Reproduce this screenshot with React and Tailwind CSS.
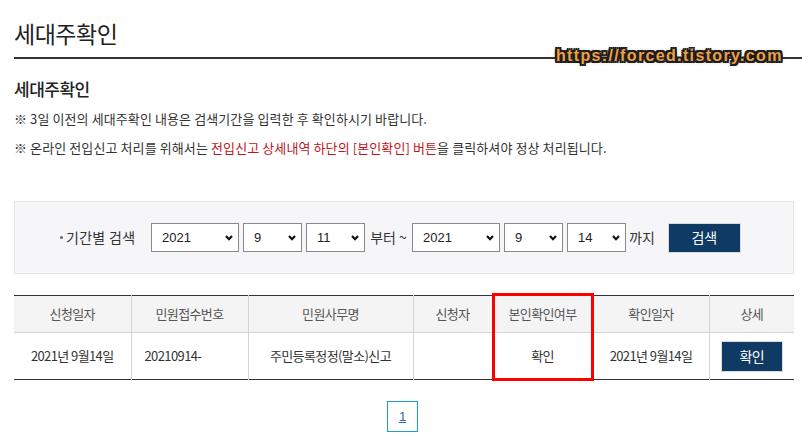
import React from "react";

const Chevron = () => (
  <svg width="8" height="6" viewBox="0 0 8 6" className="pointer-events-none absolute right-[6px] top-1/2 -translate-y-1/2">
    <polyline points="1,1 4,4.2 7,1" fill="none" stroke="#111" strokeWidth="2.2" />
  </svg>
);

const DateSelect = ({ w, value, options, className = "" }) => (
  <div className={`relative h-[29px] ${w} ${className}`}>
    <select
      defaultValue={value}
      className="h-full w-full appearance-none border border-[#8a8a8a] bg-white pl-[10px] font-['Liberation_Sans',sans-serif] text-[13px] text-[#222] outline-none"
    >
      {options.map((o) => (
        <option key={o} value={o}>{o}</option>
      ))}
    </select>
    <Chevron />
  </div>
);

const years = ["2019", "2020", "2021"];
const months = Array.from({ length: 12 }, (_, i) => String(i + 1));
const days = Array.from({ length: 31 }, (_, i) => String(i + 1));

const cols = [
  { title: "신청일자", w: "w-[117px]" },
  { title: "민원접수번호", w: "w-[117px]" },
  { title: "민원사무명", w: "w-[165px]" },
  { title: "신청자", w: "w-[79px]" },
  { title: "본인확인여부", w: "w-[101px]" },
  { title: "확인일자", w: "w-[116px]" },
  { title: "상세", w: "w-[85px]" },
];

export default function App() {
  return (
    <div className="relative h-[435px] w-[802px] overflow-hidden bg-white font-['Noto_Sans_CJK_KR',sans-serif] text-[#333]">
      {/* page title */}
      <div className="pl-[14px]">
        <h1 className="pt-[17px] text-[23px] leading-[32px] tracking-[-0.5px] text-[#222]">세대주확인</h1>
        <div className="mt-[8px] h-[2px] bg-[#333]" />
      </div>

      {/* watermark */}
      <div className="absolute left-[556px] top-[45px] font-['Liberation_Sans',sans-serif] text-[16px] font-bold leading-[22px] tracking-[1.35px] text-[#ee9f45] [text-shadow:_-2px_0_#1c1c1c,_2px_0_#1c1c1c,_0_-2px_#1c1c1c,_0_2px_#1c1c1c,_-2px_-2px_#1c1c1c,_2px_2px_#1c1c1c,_-2px_2px_#1c1c1c,_2px_-2px_#1c1c1c,_0_0_4px_#555]">
        https://forced.tistory.com
      </div>

      <div className="px-[14px]">
        <h2 className="mt-[18px] text-[17px] font-medium leading-[24px] tracking-[-0.5px] text-[#222]">세대주확인</h2>
        <p className="mt-[8px] text-[13px] leading-[20px] tracking-[0.1px]">
          ※ 3일 이전의 세대주확인 내용은 검색기간을 입력한 후 확인하시기 바랍니다.
        </p>
        <p className="mt-[9px] text-[13px] leading-[20px] tracking-[0.1px]">
          ※ 온라인 전입신고 처리를 위해서는{" "}
          <span className="text-[#c0141c]">전입신고 상세내역 하단의 [본인확인] 버튼</span>을 클릭하셔야 정상 처리됩니다.
        </p>

        {/* search box */}
        <div className="mt-[43px] flex h-[73px] w-[780px] items-center border border-[#e3e3e8] bg-[#f6f6f8] pl-[45px]">
          <span className="flex w-[91px] items-center text-[14px] tracking-[0.3px] text-[#333]">
            <span className="mr-[3px] inline-block h-[3px] w-[3px] rounded-full bg-[#666]" />
            기간별 검색
          </span>
          <DateSelect w="w-[88px]" value="2021" options={years} />
          <DateSelect w="w-[59px]" value="9" options={months} className="ml-[4px]" />
          <DateSelect w="w-[59px]" value="11" options={days} className="ml-[4px]" />
          <span className="w-[47px] text-center text-[14px]">부터 ~</span>
          <DateSelect w="w-[88px]" value="2021" options={years} />
          <DateSelect w="w-[59px]" value="9" options={months} className="ml-[4px]" />
          <DateSelect w="w-[59px]" value="14" options={days} className="ml-[4px]" />
          <span className="ml-[3px] text-[14px]">까지</span>
          <button className="ml-[13px] h-[30px] w-[73px] border border-[#d8dce2] bg-[#0f3a63] text-[14px] text-white">
            검색
          </button>
        </div>

        {/* result table */}
        <div className="relative mt-[21px] w-[780px]">
          <table className="w-full border-collapse text-[13px] tracking-[-0.6px]">
            <thead>
              <tr className="h-[37px] border-t border-[#333] border-b border-b-[#d4d4d4] bg-[#f4f4f4]">
                {cols.map((c, i) => (
                  <th
                    key={c.title}
                    className={`${c.w} font-normal text-[#555] ${i > 0 ? "border-l border-[#d4d4d4]" : ""}`}
                  >
                    {c.title}
                  </th>
                ))}
              </tr>
            </thead>
            <tbody>
              <tr className="h-[47px] border-b border-[#333]">
                <td className="text-center">2021년 9월14일</td>
                <td className="border-l border-[#d4d4d4] pl-[13px]">20210914-</td>
                <td className="border-l border-[#d4d4d4] text-center">주민등록정정(말소)신고</td>
                <td className="border-l border-[#d4d4d4]" />
                <td className="border-l border-[#d4d4d4] text-center">확인</td>
                <td className="border-l border-[#d4d4d4] text-center">2021년 9월14일</td>
                <td className="border-l border-[#d4d4d4] text-center">
                  <button className="h-[31px] w-[62px] border border-[#d8dce2] bg-[#0f3a63] text-[14px] text-white">
                    확인
                  </button>
                </td>
              </tr>
            </tbody>
          </table>
          {/* highlight box */}
          <div className="pointer-events-none absolute left-[478px] top-[-2px] h-[88px] w-[102px] border-[3px] border-[#ff0000]" />
        </div>

        {/* pagination */}
        <div className="mt-[21px] flex justify-center">
          <div className="ml-[3px] flex h-[31px] w-[31px] items-center justify-center border border-solid border-[#1e9be3] font-['Liberation_Sans',sans-serif] text-[13px] text-[#2668ab] underline">
            1
          </div>
        </div>
      </div>
    </div>
  );
}
